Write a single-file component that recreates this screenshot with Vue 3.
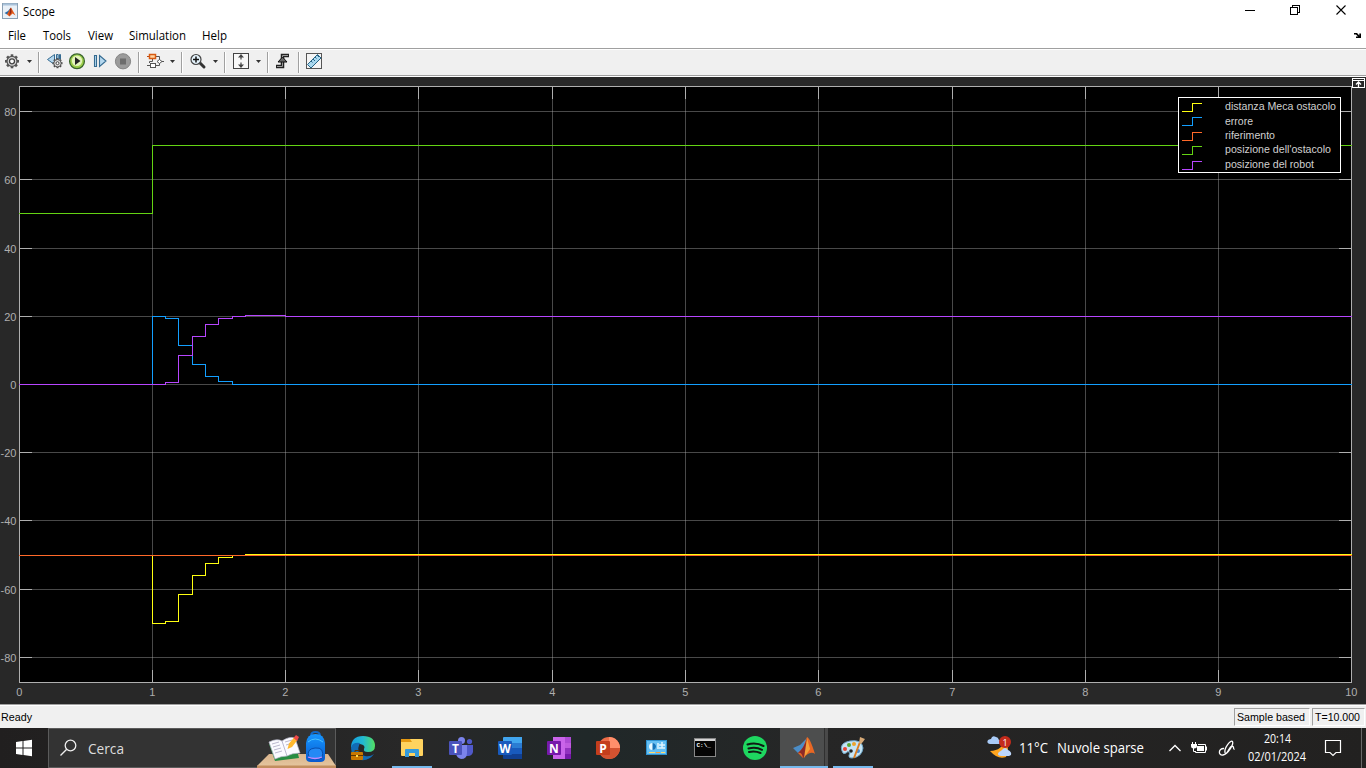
<script setup>
import { h } from 'vue'

// Single line of text fitted to a known width
const Label = ({ t, w, base = 13, height = 18, size = 12, fill = '#000', font = 'Open Sans' }) =>
  h('svg', { width: w + 2, height, style: { display: 'block', flex: 'none', overflow: 'visible' } }, [
    h('text', { x: 0, y: base, fill, 'font-size': size, 'font-family': `"${font}", sans-serif`, textLength: w, lengthAdjust: 'spacingAndGlyphs' }, t),
  ])
Label.props = ['t', 'w', 'base', 'height', 'size', 'fill', 'font']

const menus = [
  { t: 'File', w: 18, gap: 8 },
  { t: 'Tools', w: 28, gap: 17 },
  { t: 'View', w: 25, gap: 17 },
  { t: 'Simulation', w: 57, gap: 16 },
  { t: 'Help', w: 25, gap: 16 },
]

const xs = [152, 285, 418, 552, 685, 818, 952, 1085, 1218]
const xLabels = [19, ...xs, 1351].map((x, i) => ({ x, t: String(i) }))
const ys = [
  { y: 111, t: '80' }, { y: 179, t: '60' }, { y: 248, t: '40' }, { y: 316, t: '20' }, { y: 384, t: '0' },
  { y: 452, t: '-20' }, { y: 520, t: '-40' }, { y: 589, t: '-60' }, { y: 657, t: '-80' },
]
const series = [
  { c: '#ffff11', d: 'M19 555H152V623H165V621H178V594H192V575H205V563H218V557H232V555H245V554H1351' },
  { c: '#139fff', d: 'M152 384V316H165V318H178V345H192V364H205V376H218V381H232V384H1351' },
  { c: '#ff6929', d: 'M19 555H1351' },
  { c: '#64d413', d: 'M19 213H152V145H1351' },
  { c: '#b746ff', d: 'M19 384H165V382H178V355H192V336H205V324H218V318H232V316H245V315H285V316H1351' },
]
const legend = [
  { t: 'distanza Meca ostacolo', c: '#ffff11', y: 103, base: 110, w: 111 },
  { t: 'errore', c: '#139fff', y: 117, base: 125, w: 28 },
  { t: 'riferimento', c: '#ff6929', y: 132, base: 139, w: 50 },
  { t: "posizione dell'ostacolo", c: '#64d413', y: 146, base: 153, w: 106 },
  { t: 'posizione del robot', c: '#b746ff', y: 161, base: 168, w: 89 },
]
const teeth = [0, 45, 90, 135, 180, 225, 270, 315]
</script>

<template>
  <div class="screen">
    <header class="title">
      <svg width="21" height="23" viewBox="0 0 21 23">
        <rect x="2.5" y="3.5" width="15" height="15" fill="#e9f0f7" stroke="#8aa0b4" />
        <path d="M3 4.500H17" stroke="#a9c2da" stroke-width="2" />
        <path d="M4.500 13L8 11L10.500 8L9 13L7 14.500Z" fill="#2d6ca7" />
        <path d="M7 14.500L10 9L11 7.500L15.500 15.500L12.500 13.500L9.500 16.500Z" fill="#e2591a" />
        <path d="M10 9L11 7.500L11.500 12L9.500 16Z" fill="#8b2514" />
      </svg>
      <div class="name"><Label t="Scope" :w="32" /></div>
      <svg class="winctl" width="126" height="23" viewBox="1240 0 126 23" fill="none" stroke="#000" shape-rendering="crispEdges">
        <path d="M1245 10.5H1255M1290.5 7.5H1297.5V14.5H1290.5ZM1292.5 7V5.5H1299.5V12.5H1298" />
        <path d="M1336.5 5.5L1345.5 14.5M1345.5 5.5L1336.5 14.5" shape-rendering="auto" stroke-width="1.1" />
      </svg>
    </header>
    <nav class="menu">
      <div v-for="m in menus" :key="m.t" :style="{ marginLeft: m.gap + 'px', width: m.w + 'px' }"><Label :t="m.t" :w="m.w" /></div>
      <svg class="undock" width="14" height="12" viewBox="1352 30 14 12"><path d="M1354 33H1357L1359.300 35.500V33.500H1361V38H1356V36.500H1358L1356 34.500H1354Z" /></svg>
    </nav>
    <div class="toolbar">
      <svg width="38" height="25" viewBox="0 50 38 25">
        <g transform="translate(12 61.300)">
          <rect v-for="a in teeth" :key="a" x="-1.300" y="-7" width="2.600" height="3" fill="#555" :transform="`rotate(${a})`" />
          <circle r="5" fill="#d8d8d8" stroke="#555" stroke-width="1.300" /><circle r="2.500" fill="#fafafa" stroke="#444" stroke-width="1.300" />
        </g>
        <path class="caret" d="M27 60H32L29.5 63Z" />
      </svg>
      <i class="sep"></i>
      <svg width="98" height="25" viewBox="40 50 98 25">
        <path d="M47.500 59.500L54.500 54.500V64.500ZM56.500 54.500H58.200V60H56.500ZM59.500 54.500H60.500V59H59.500Z" fill="#b5d8ef" stroke="#356b91" />
        <g transform="translate(57.500 63.200)">
          <rect v-for="a in teeth" :key="a" x="-1" y="-5" width="2" height="2" fill="#444" :transform="`rotate(${a})`" />
          <circle r="3.700" fill="#ddd" stroke="#555" /><circle r="1.500" fill="#fff" stroke="#444" />
        </g>
        <circle cx="77" cy="61.300" r="7.400" fill="#9cce4a" stroke="#39652c" stroke-width="1.300" />
        <circle cx="77" cy="60.800" r="5.200" fill="#e4f5bb" /><path d="M75 57L80.500 61L75 65Z" fill="#222" />
        <path d="M94.500 55.500H96.500V66.500H94.500ZM99.500 55.500L106 61L99.500 66.500Z" fill="#b5d8ef" stroke="#356b91" stroke-width="1.100" />
        <circle cx="123" cy="61.300" r="7.600" fill="#9b9b9b" stroke="#858585" /><rect x="120" y="58.500" width="6" height="6" fill="#6d6d6d" />
      </svg>
      <i class="sep"></i>
      <svg width="41" height="25" viewBox="140 50 41 25" fill="none">
        <path d="M156 56.500H159.500V60M147 65.500H150M156 65.500H159.500V63M162 61.500H164M152.500 59V61.500H149.500V63" stroke="#555" />
        <path d="M147 56.500H149" stroke="#b84b16" /><rect x="149.500" y="54.500" width="6" height="4" fill="#ffd4a0" stroke="#d75910" stroke-width="1.500" />
        <rect x="150.500" y="63.500" width="5" height="4" fill="#fff" stroke="#555" /><path d="M157 61.500L159.500 59.500L162 61.500L159.500 63.500Z" fill="#fff" stroke="#555" />
        <path class="caret" d="M170 60H175L172.500 63Z" />
      </svg>
      <i class="sep"></i>
      <svg width="41" height="25" viewBox="183 50 41 25">
        <path d="M200 63L204 67" stroke="#333" stroke-width="3" stroke-linecap="round" /><circle cx="196" cy="59.500" r="5" fill="#e6f4fd" stroke="#444" stroke-width="1.200" />
        <path d="M193 59.500H199M196 56.500V62.500" stroke="#111" stroke-width="1.500" /><path class="caret" d="M213 60H218L215.500 63Z" />
      </svg>
      <i class="sep"></i>
      <svg width="41" height="25" viewBox="226 50 41 25">
        <rect x="233.500" y="53.500" width="15" height="15" fill="#f8f8f8" stroke="#444" />
        <path d="M241 54L244 57.500H241.600V59.500H240.400V57.500H238ZM241 68L244 64.500H241.600V62.500H240.400V64.500H238Z" fill="#444" /><path class="caret" d="M256 60H261L258.500 63Z" />
      </svg>
      <i class="sep"></i>
      <svg width="29" height="25" viewBox="269 50 29 25">
        <path d="M276 66.500H282.500V55.500H289" fill="none" stroke="#222" stroke-width="3.500" /><path d="M277 66.500H282.500V55.500H288" fill="none" stroke="#999" />
        <path d="M278 62L282.500 57L287 62Z" fill="#666" stroke="#111" />
      </svg>
      <i class="sep"></i>
      <svg width="25" height="25" viewBox="300 50 25 25">
        <rect x="306.500" y="53.500" width="15" height="15" fill="#f4f4f4" stroke="#555" />
        <path d="M307.500 64.500L317.500 54.500L321 58L311 68Z" fill="#a9d8ef" stroke="#276486" /><path d="M311 61L312.500 62.500M313 59L315 61M315 57L316.500 58.500M317 55L319 57" stroke="#276486" />
      </svg>
    </div>

    <main class="scope">
      <svg width="1366" height="627" viewBox="0 77 1366 627">
        <g shape-rendering="crispEdges" fill="none">
          <rect x="19.500" y="86.500" width="1332" height="596" fill="#000" stroke="#afafaf" />
          <g transform="translate(.5 .5)">
            <path v-for="g in ys" :key="g.t" :d="`M20 ${g.y}H1351`" stroke="#afafaf" stroke-opacity=".42" />
            <path v-for="x in xs" :key="x" :d="`M${x} 87V682`" stroke="#afafaf" stroke-opacity=".42" />
            <path v-for="g in ys" :key="'t' + g.t" :d="`M19 ${g.y}H31.500M1338.500 ${g.y}H1351`" stroke="#afafaf" />
            <path v-for="x in xs" :key="'t' + x" :d="`M${x} 86V98.500M${x} 669.500V682`" stroke="#afafaf" />
            <path v-for="s in series" :key="s.c" :d="s.d" :stroke="s.c" stroke-linecap="square" />
            <path d="M245 554H1351" stroke="#ffff11" />
          </g>
          <rect x="1178.500" y="97.500" width="162" height="75" fill="#000" stroke="#fff" />
          <path v-for="l in legend" :key="l.t" :d="`M1182 ${l.y + 8.5}H1192.500V${l.y + .5}H1202`" :stroke="l.c" />
          <rect x="1352.500" y="78.500" width="12" height="9" fill="#282828" stroke="#fff" /><path d="M1353 80.500H1364" stroke="#fff" />
        </g>
        <path d="M1358.500 82V87M1356 84.500L1358.500 82L1361 84.500" stroke="#fff" stroke-width="1.300" fill="none" />
        <g class="axis">
          <text v-for="g in ys" :key="g.t" x="16.400" :y="g.y + 4.5" text-anchor="end">{{ g.t }}</text>
          <text v-for="l in xLabels" :key="l.t" :x="l.x + .3" y="696" text-anchor="middle">{{ l.t }}</text>
        </g>
        <text v-for="l in legend" :key="l.t" class="key" x="1225" :y="l.base" :textLength="l.w" lengthAdjust="spacingAndGlyphs">{{ l.t }}</text>
      </svg>
    </main>

    <footer class="status">
      <div class="ready"><Label t="Ready" :w="31" :size="11" font="Liberation Sans" /></div>
      <div class="panel mode"><Label t="Sample based" :w="68" :size="11" font="Liberation Sans" /></div>
      <div class="panel time"><Label t="T=10.000" :w="45" :size="11" font="Liberation Sans" /></div>
    </footer>

    <div class="taskbar">
      <svg width="48" height="40" viewBox="0 728 48 40"><path d="M16 742L22.500 741V747.500H16ZM23.500 740.900L32 739.700V747.500H23.500ZM16 748.500H22.500V755L16 754ZM23.500 748.500H32V756.300L23.500 755.100Z" fill="#fff" /></svg>
      <div class="search">
        <svg width="39" height="38" viewBox="49 729 39 38" fill="none" stroke="#eee" stroke-width="1.300"><circle cx="70.500" cy="745.500" r="5.300" /><path d="M66.700 749.300L60.500 755.500" /></svg>
        <Label t="Cerca" :w="36" :size="14.5" :base="16" :height="20" fill="#ddd" />
        <svg class="art" width="80" height="39" viewBox="256 729 80 39">
          <defs><linearGradient id="desk" x2="0" y2="1"><stop stop-color="#d9b48d" /><stop offset="1" stop-color="#e6c7a0" /></linearGradient><linearGradient id="bag" x2="0" y2="1"><stop stop-color="#1797ff" /><stop offset="1" stop-color="#0759cf" /></linearGradient></defs>
          <path d="M257 766L269 754H328L336 766V768H257Z" fill="url(#desk)" /><path d="M257 765.500H336V768H257Z" fill="#c28e5e" />
          <path d="M269 744L275 761L299 758L295 742Z" fill="#278c42" /><path d="M269 742Q277 738 282 741Q289 736 295 738L300 753Q292 753 287 756Q281 756 275 759Z" fill="#fafaff" stroke="#b7b7ca" stroke-width=".7" />
          <path d="M282 741L287 756M272 744L279 742M273 747L280 745M274 750L281 748M275 753L282 751M285 742L292 740M286 745L293 743" stroke="#aaa7c2" stroke-width=".8" />
          <path d="M287.500 749L289 743.500L294.500 737L297.500 740L292 747Z" fill="#ffb82e" /><path d="M293.500 738L296 735L299 737L297 741Z" fill="#ee4848" />
          <path d="M311 736Q311 732 315.500 732T320 736" fill="none" stroke="#1269c8" stroke-width="2" /><path d="M306 743Q307 734 315.500 734T325 743V758Q325 762 320 762H311Q306 762 306 758Z" fill="url(#bag)" />
          <path d="M308 742Q315 736 323 742" stroke="#4ac2ff" fill="none" /><path d="M309 757Q306 749 315 748Q325 747 322 758Q318 760 309 758Z" fill="#2489f5" stroke="#084fad" /><path d="M308 757Q315 760 322 757" stroke="#c58aff" fill="none" stroke-width="1.300" />
        </svg>
      </div>
      <svg width="50" height="40" viewBox="336 728 50 40">
        <defs><linearGradient id="edge"><stop stop-color="#159de0" /><stop offset=".5" stop-color="#22bad2" /><stop offset="1" stop-color="#53df61" /></linearGradient></defs>
        <path d="M351 748Q351 736 363 736Q375 736 375 746Q375 752 368 752Q363 752 364 749Q366 745 360 744Q354 744 351 748Z" fill="url(#edge)" /><path d="M351 748Q352 742 360 743Q355 753 365 756Q370 757 374 754Q369 761 361 760Q351 758 351 748Z" fill="#126bb5" />
        <rect x="351" y="752" width="12" height="8" rx="1" fill="#c97800" /><path d="M355 752V750.500H359V752M351 755.500H363" stroke="#5f3500" fill="none" /><rect x="356" y="755" width="2" height="2" fill="#ffdb52" />
      </svg>
      <svg width="49" height="40" viewBox="386 728 49 40"><rect x="401" y="739" width="22" height="17" rx="1" fill="#ffd35f" /><path d="M401 739H410L412 742H401Z" fill="#e69a12" /><path d="M405 757V750Q405 749 406 749H418Q419 749 419 750V757H415V753H409V757Z" fill="#359bdc" /><rect class="run" x="392" width="40" /></svg>
      <svg width="49" height="40" viewBox="435 728 49 40"><circle cx="469.500" cy="741.500" r="2.600" fill="#5059c9" /><circle cx="461.500" cy="740.500" r="3.500" fill="#7b83eb" /><path d="M465 745H473V752Q472 756 468 756H465Z" fill="#5059c9" /><path d="M457 745H467V753Q467 759 461 759Q457 758 456 754Z" fill="#7b83eb" /><rect x="449" y="741" width="13" height="14" rx="1" fill="#4b53bc" /><text x="455.500" y="752.500" class="app">T</text></svg>
      <svg width="49" height="40" viewBox="484 728 49 40"><path d="M503 738Q503 737 504 737H522V743H503Z" fill="#41a5ee" /><path d="M503 743H522V748H503Z" fill="#2b7cd3" /><path d="M503 748H522V754H503Z" fill="#185abd" /><path d="M503 754H522V759H504Q503 759 503 758Z" fill="#103f91" /><rect x="498" y="741" width="14" height="14" rx="1" fill="#185abd" /><text x="505" y="752.500" class="app">W</text></svg>
      <svg width="49" height="40" viewBox="533 728 49 40"><rect x="553" y="737" width="12" height="22" fill="#ca64ea" /><path d="M565 737H571V743H565Z" fill="#ae4bd5" /><path d="M565 743H571V748H565Z" fill="#c05be0" /><path d="M565 748H571V754H565Z" fill="#9332bf" /><path d="M565 754H571V759H565Z" fill="#7719aa" /><rect x="547" y="741" width="14" height="14" rx="1" fill="#7719aa" /><text x="554" y="752.500" class="app">N</text></svg>
      <svg width="49" height="40" viewBox="582 728 49 40"><circle cx="609" cy="748" r="11" fill="#ed6c47" /><path d="M609 737A11 11 0 0 1 620 748H609Z" fill="#ff8f6b" /><path d="M598 748H620A11 11 0 0 1 598 748Z" fill="#d35230" /><rect x="596" y="741" width="14" height="14" rx="1" fill="#c43e1c" /><text x="603" y="752.500" class="app">P</text></svg>
      <svg width="49" height="40" viewBox="631 728 49 40"><rect x="646.500" y="740.500" width="20" height="14" fill="#65bff3" stroke="#2e93d2" /><circle cx="652.500" cy="746.500" r="3.500" fill="#eaf9ff" /><path d="M652.500 746.500V743A3.500 3.500 0 0 1 652.500 750Z" fill="#1474bb" /><path d="M659 745H665M659 748H665M658 743V749M662 742V748" stroke="#dff5ff" stroke-width="1.500" /><path d="M649 752.500H655M661 752.500H665" stroke="#ffda6e" /><path d="M656 752.500H660" stroke="#ff9a30" /></svg>
      <svg width="49" height="40" viewBox="680 728 49 40"><rect x="694.500" y="738.500" width="21" height="18" fill="#050505" stroke="#888" /><path d="M695 740H715" stroke="#d5d5d5" stroke-width="2" /><text x="696.500" y="746.500" class="prompt">C:\_</text></svg>
      <svg width="51" height="40" viewBox="729 728 51 40"><circle cx="755" cy="748" r="12" fill="#1ed760" /><path d="M747.500 744.500Q756 742 763.500 746M748.500 748.500Q756 746.500 762 749.800M749 752Q755 750.500 760.500 753" fill="none" stroke="#101a13" stroke-width="2" stroke-linecap="round" /></svg>
      <svg class="active" width="48" height="40" viewBox="780 728 48 40"><path d="M824.500 728V766" stroke="#303030" /><rect x="825" y="728" width="3" height="40" fill="#494949" /><path d="M793 748L800 745L807 738L804 750L798 753Z" fill="#4b8dc7" /><path d="M798 753L803 748L807 737Q810 738 815 754Q811 750 803 758Z" fill="#e86724" /><path d="M798 753Q804 748 807 738L806 756L803 758Q802 752 798 753Z" fill="#8e2926" /><path d="M807 738L810 749L804 758Z" fill="#f6a13a" /><rect class="run" x="780" width="48" /></svg>
      <svg width="50" height="40" viewBox="828 728 50 40"><path d="M842 751Q839 743 850 741Q862 739 863 748Q862 757 852 758Q847 758 850 753Q848 750 846 753Q843 755 842 751Z" fill="#c5e4f5" stroke="#6ea6c8" /><circle cx="845" cy="749" r="2" fill="#e54534" /><circle cx="849" cy="745" r="2" fill="#55a835" /><circle cx="854" cy="744" r="2" fill="#eda32d" /><circle cx="851" cy="751" r="1.800" fill="#222" /><circle cx="858" cy="751" r="2" fill="#4687ce" /><path d="M854 758L860 742" stroke="#dc7c20" stroke-width="2" /><path d="M859 743L860 737L865 739Q863 742 861 744Z" fill="#d6a977" /><rect class="run" x="833" width="40" /></svg>
      <div class="weather">
        <svg width="33" height="40" viewBox="986 728 33 40"><path d="M1003 741Q1003 750 990 751Q998 760 1006 757Q1011 746 1003 741Z" fill="#ffa51f" /><path d="M990 744Q986 743 988 740Q990 739 991 739Q992 735 996 737Q998 737 999 740Q1003 742 999 744Z" fill="#a9cbf7" /><path d="M1001 756Q996 755 999 752Q1001 751 1002 750Q1005 746 1008 750Q1012 752 1011 755L1009 756Z" fill="#bdd7fb" /><circle cx="1005" cy="742" r="6" fill="#c42b1c" /><text x="1005" y="745.500" text-anchor="middle" class="count">1</text></svg>
        <div class="temp"><Label t="11°C" :w="29" :size="14" :base="15" :height="20" fill="#fff" /></div>
        <Label t="Nuvole sparse" :w="87" :size="14" :base="15" :height="20" fill="#fff" />
      </div>
      <svg class="tray" width="78" height="40" viewBox="1164 728 78 40" fill="none" stroke="#fff"><path d="M1169.500 751L1175 745.500L1180.500 751" stroke-width="1.300" /><path d="M1198 744.500H1205.500V752.500H1195.500V751M1206.500 746.500V750.500M1193.500 748V751.500H1196M1192.500 742V744M1195.500 742V744" /><rect x="1197" y="746" width="7" height="5" fill="#fff" stroke="none" /><path d="M1191 744H1197V746Q1197 748.500 1194 748.500Q1191 748.500 1191 746Z" fill="#fff" stroke="none" /><path d="M1224 748.500C1218 748 1218 756 1223 755C1228 754 1234 744 1232.500 741.500C1230.500 739.500 1224 748 1225 752.500C1226.500 756 1229 748 1231 746.500C1234.500 745 1233 750 1234.500 749" stroke-width="1.300" /></svg>
      <div class="clock"><Label t="20:14" :w="27" :size="12" :height="17" fill="#fff" /><Label t="02/01/2024" :w="58" :size="12" :height="17" fill="#fff" /></div>
      <svg class="notice" width="50" height="40" viewBox="1316 728 50 40" fill="none" stroke="#fff"><path d="M1325.500 740.500H1340.500V752.500H1336L1333 755.500L1330 752.500H1325.500Z" stroke-width="1.200" /><path d="M1361.500 728V768" stroke="#686868" /></svg>
    </div>
  </div>
</template>

<style>
body { margin: 0; overflow: hidden; }
</style>
<style scoped>
.screen { width: 1366px; height: 768px; overflow: hidden; background: #fff; display: flex; flex-direction: column; }
svg { display: block; flex: none; }
.title { height: 23px; display: flex; }
.name { padding: 3px 0 0 2px; }
.winctl, .undock { margin-left: auto; }
.menu { height: 25px; display: flex; align-items: flex-start; padding-top: 4px; box-sizing: border-box; }
.undock { margin-top: 3px; }
.toolbar { height: 29px; box-sizing: border-box; border-top: 1px solid #a0a0a0; border-bottom: 1px solid #fff; background: #f0f0f0; display: flex; box-shadow: inset 0 1px #fff, inset 0 -1px #a0a0a0; padding-top: 1px; }
.sep { width: 1px; height: 21px; margin: 2px 0 0; background: #a0a0a0; border-right: 1px solid #fff; flex: none; }
.caret { fill: #333; stroke: none; }
.scope { height: 627px; background: #282828; }
.axis { font: 11px "Liberation Sans", sans-serif; fill: #afafaf; }
.key { font: 11px "Liberation Sans", sans-serif; fill: #d0d0d0; }
.status { height: 24px; box-sizing: border-box; border-top: 1px solid #a0a0a0; box-shadow: inset 0 1px #fff; background: #f0f0f0; display: flex; padding-top: 3px; }
.ready { flex: 1; padding: 0 0 0 1px; }
.panel { height: 18px; box-sizing: border-box; border: 1px solid; border-color: #a0a0a0 #fff #fff #a0a0a0; margin-right: 2px; }
.panel svg { margin-top: -1px; }
.mode { width: 76px; padding-left: 2px; }
.time { width: 53px; padding-left: 2px; margin-right: 1px; }
.taskbar { height: 40px; display: flex; background: linear-gradient(90deg, #211f1f, #282828 30%, #202829 43%, #262626 60%, #222120); }
.search { width: 288px; height: 40px; box-sizing: border-box; background: #333; border: 1px solid #5b5b5b; display: flex; align-items: center; }
.art { margin-left: auto; margin-right: -1px; }
.run { y: 766px; height: 2px; fill: #76b9ed; }
.active { background: #4d4e4e; }
.app { font: bold 12px "Open Sans", sans-serif; fill: #fff; text-anchor: middle; }
.prompt { font: bold 6px "Liberation Mono", monospace; fill: #fff; }
.count { font: 9px "Open Sans", sans-serif; fill: #fff; }
.weather { margin-left: auto; display: flex; align-items: center; }
.temp { width: 38px; }
.tray { margin-left: 18px; }
.clock { width: 72px; margin-right: 2px; display: flex; flex-direction: column; align-items: center; padding-top: 2px; gap: 1px; }
</style>
